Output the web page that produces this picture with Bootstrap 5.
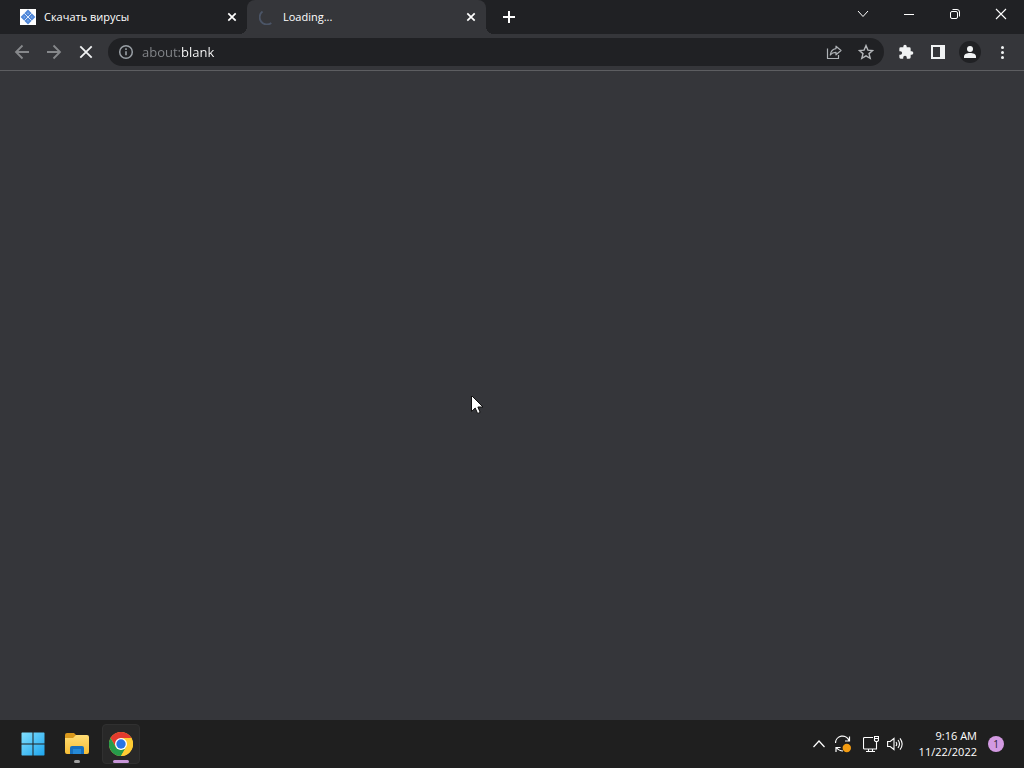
<!DOCTYPE html>
<html lang="en">
<head>
<meta charset="utf-8">
<meta name="viewport" content="width=device-width, initial-scale=1">
<title>Loading...</title>
<link rel="stylesheet" href="https://cdn.jsdelivr.net/npm/bootstrap@5.3.0/dist/css/bootstrap.min.css">
<style>
  :root { --strip: #202124; --bar: #35363a; --task: #1f1f1f; }
  body { background: var(--bar); color: #fff; font: 11px/16px "Open Sans", "Noto Sans", sans-serif; overflow: hidden; }
  button { background: none; border: 0; padding: 0; color: inherit; }
  svg { display: block; flex: none; }
  .strip { background: var(--strip); height: 34px; padding-left: 8px; }
  .tab { width: 239px; height: 34px; padding: 0 7px 0 12px; font-weight: 500; }
  .tab-open { background: var(--bar); border-radius: 8px 8px 0 0; position: relative; }
  .tab-open::before, .tab-open::after { content: ""; position: absolute; bottom: 0; width: 8px; height: 8px; }
  .tab-open::before { left: -8px; background: radial-gradient(circle at 0 0, var(--strip) 8px, var(--bar) 8px); }
  .tab-open::after { right: -8px; background: radial-gradient(circle at 100% 0, var(--strip) 8px, var(--bar) 8px); }
  .win { width: 46px; height: 28px; }
  .tools { height: 37px; padding: 0 6px; border-bottom: 1px solid #5d5e61; }
  .tool { width: 32px; height: 28px; }
  .omni { background: var(--strip); height: 28px; border-radius: 14px; margin: 0 6px; padding: 0 2px 0 10px; color: #9aa0a6; }
  .omni input { border: 0; outline: 0; padding: 0; font-size: 13px; line-height: 20px; min-width: 0;
    background: linear-gradient(90deg, #85888c 39px, #fff 39px); -webkit-background-clip: text; background-clip: text; color: transparent; }
  .avatar { width: 22px; height: 22px; background: var(--strip); border-radius: 50%; }
  .taskbar { background: var(--task); height: 48px; padding: 0 20px 0 11px; }
  .app { width: 44px; height: 48px; position: relative; }
  .app-open::before { content: ""; position: absolute; inset: 4px 3px; border-radius: 4px; background: #282828; border: 1px solid #303030; }
  .app svg { position: relative; }
  .app i { position: absolute; bottom: 5px; left: 50%; translate: -50%; width: 6px; height: 3px; border-radius: 2px; background: #a0a0a0; }
  .app-open i { width: 16px; background: #c795d8; }
  .clock { line-height: 16px; margin-left: 16px; }
  .count { width: 16px; height: 16px; border-radius: 50%; background: #d39ae2; color: #2b1f30; font-size: 10px; line-height: 16px; margin-left: 11px; }
  .pointer { position: absolute; left: 46%; top: 50%; }
</style>
</head>
<body class="d-flex flex-column vh-100">
<header>
  <div class="strip d-flex align-items-center">
    <div class="tab d-flex align-items-center">
      <svg width="16" height="16" viewBox="0 0 16 16"><path fill="#fff" d="M0 0h16v16H0z"/><path fill="#5087d8" d="M8 .6 15.4 8 8 15.4.6 8z"/><path d="m4.3 4.3 7.4 7.4m0-7.4-7.4 7.4" stroke="#dbe8fb" stroke-width="1"/><path d="m8 3.3 1 1-1 1-1-1zm0 7.4 1 1-1 1-1-1zM4.300 7l1 1-1 1-1-1zm7.400 0 1 1-1 1-1-1z" fill="#83adeb"/></svg>
      <span class="ms-2 flex-grow-1 text-nowrap">Скачать вирусы</span>
      <button aria-label="Close tab"><svg width="16" height="16" viewBox="0 0 16 16"><path d="m4.300 4.300 7.400 7.400m0-7.400-7.400 7.400" stroke="#fff" stroke-width="1.700"/></svg></button>
    </div>
    <div class="tab tab-open d-flex align-items-center">
      <svg width="16" height="16" viewBox="0 0 16 16"><path d="M3.500 2.500A6.500 6.500 0 0 0 12.300 14" fill="none" stroke="#4b5567" stroke-width="1.800"/></svg>
      <span class="ms-2 flex-grow-1 text-nowrap">Loading...</span>
      <button aria-label="Close tab"><svg width="16" height="16" viewBox="0 0 16 16"><path d="m4.300 4.300 7.400 7.400m0-7.400-7.400 7.400" stroke="#fff" stroke-width="1.700"/></svg></button>
    </div>
    <button class="ms-2 p-1" aria-label="New tab"><svg width="20" height="20" viewBox="0 0 20 20"><path d="M11 4v12M5 10h12" stroke="#fff" stroke-width="2"/></svg></button>
    <div class="d-flex ms-auto align-self-start">
      <button class="win d-flex align-items-center justify-content-center" aria-label="Search tabs"><svg width="12" height="12" viewBox="0 0 12 12"><path d="m1 3 5 5.500L11 3" fill="none" stroke="#fff"/></svg></button>
      <button class="win d-flex align-items-center justify-content-center" aria-label="Minimize"><svg width="12" height="12" viewBox="0 0 12 12"><path d="M1 6.500h10" stroke="#fff"/></svg></button>
      <button class="win d-flex align-items-center justify-content-center" aria-label="Restore"><svg width="12" height="12" viewBox="0 0 12 12" fill="none" stroke="#fff"><rect x="1.500" y="3.500" width="7" height="7" rx="1.500"/><path d="M3.500 1.500H8a2.500 2.500 0 0 1 2.500 2.500v4.500"/></svg></button>
      <button class="win d-flex align-items-center justify-content-center" aria-label="Close"><svg width="12" height="12" viewBox="0 0 12 12"><path d="m1 1 10 10m0-10L1 11" stroke="#fff" stroke-width="1.100"/></svg></button>
    </div>
  </div>
  <div class="tools d-flex align-items-center">
    <button class="tool d-flex align-items-center justify-content-center" aria-label="Back"><svg width="16" height="16" viewBox="0 0 16 16"><path d="M15 8H2m6.500-6.500L2 8l6.500 6.500" fill="none" stroke="#86888b" stroke-width="1.800"/></svg></button>
    <button class="tool d-flex align-items-center justify-content-center" aria-label="Forward"><svg width="16" height="16" viewBox="0 0 16 16"><path d="M1 8h13M7.500 1.500 14 8l-6.500 6.500" fill="none" stroke="#86888b" stroke-width="1.800"/></svg></button>
    <button class="tool d-flex align-items-center justify-content-center" aria-label="Stop"><svg width="16" height="16" viewBox="0 0 16 16"><path d="m2.300 2.300 11.400 11.400m0-11.400L2.300 13.700" stroke="#f1f3f4" stroke-width="1.800"/></svg></button>
    <div class="omni d-flex align-items-center flex-grow-1">
      <svg width="16" height="16" viewBox="0 0 16 16"><circle cx="8" cy="8" r="6.300" fill="none" stroke="#9aa0a6" stroke-width="1.500"/><path d="M8 7.200v4M8 4.300v1.600" stroke="#9aa0a6" stroke-width="1.600"/></svg>
      <input class="ms-2 flex-grow-1" type="text" value="about:blank" aria-label="Address">
      <button class="tool d-flex align-items-center justify-content-center" aria-label="Share"><svg width="16" height="16" viewBox="0 0 16 16" fill="none" stroke="#aeb2b6" stroke-width="1.200" stroke-linejoin="round"><path d="M1.500 4.500v10h11V11"/><path d="M10 2.200 15 6.500l-5 4.300V8.300C7.500 8.200 5.800 9 4.300 11 4.800 7.300 6.700 5 10 4.600z"/></svg></button>
      <button class="tool d-flex align-items-center justify-content-center" aria-label="Bookmark"><svg width="16" height="16" viewBox="0 0 16 16"><path d="m8 1.600 1.900 4.500 4.800.4-3.700 3.100 1.200 4.700L8 11.800l-4.200 2.500L5 9.600 1.300 6.500l4.800-.4z" fill="none" stroke="#b4b7ba" stroke-width="1.400"/></svg></button>
    </div>
    <button class="tool d-flex align-items-center justify-content-center" aria-label="Extensions"><svg width="16" height="16" viewBox="0 0 24 24"><path fill="#f1f3f4" d="M20.500 11H19V7a2 2 0 0 0-2-2h-4V3.500a2.500 2.500 0 0 0-5 0V5H4a2 2 0 0 0-2 2v3.800h1.500a2.700 2.700 0 0 1 0 5.400H2V20a2 2 0 0 0 2 2h3.800v-1.500a2.700 2.700 0 0 1 5.400 0V22H17a2 2 0 0 0 2-2v-4h1.500a2.500 2.500 0 0 0 0-5z"/></svg></button>
    <button class="tool d-flex align-items-center justify-content-center" aria-label="Side panel"><svg width="16" height="16" viewBox="0 0 16 16"><path fill="#f1f3f4" fill-rule="evenodd" d="M1 1h14v14H1zm2 2v10h7V3z"/></svg></button>
    <button class="tool d-flex align-items-center justify-content-center" aria-label="Profile"><span class="avatar d-flex align-items-center justify-content-center"><svg width="16" height="16" viewBox="0 0 16 16" fill="#f1f3f4"><circle cx="8" cy="5" r="3"/><path d="M2 14v-1.500C2 10 5 9 8 9s6 1 6 3.500V14z"/></svg></span></button>
    <button class="tool d-flex align-items-center justify-content-center" aria-label="Menu"><svg width="16" height="16" viewBox="0 0 16 16" fill="#f1f3f4"><circle cx="8.500" cy="3.500" r="1.500"/><circle cx="8.500" cy="8.500" r="1.500"/><circle cx="8.500" cy="13.500" r="1.500"/></svg></button>
  </div>
</header>
<main class="flex-grow-1 position-relative">
  <svg class="pointer" width="13" height="20" viewBox="0 1 13 20"><path d="M.5.5v16l3.700-3.500 2.400 5.500 2.600-1.100L6.900 12H12z" fill="#fff" stroke="#111"/></svg>
</main>
<footer class="taskbar d-flex align-items-center">
  <button class="app d-flex align-items-center justify-content-center" aria-label="Start"><svg width="24" height="24" viewBox="0 0 24 24"><defs><linearGradient id="win" gradientUnits="userSpaceOnUse" x1="0" y1="0" x2="24" y2="24"><stop stop-color="#83e0fd"/><stop offset="1" stop-color="#1ba4ee"/></linearGradient></defs><path fill="url(#win)" d="M1 .5h10.500V11.500H.5V1zM12.500.5H23l.5.5v10.500h-11zM.5 12.500h11v11H1l-.5-.5zM12.500 12.500h11V23l-.5.5H12.500z"/></svg></button>
  <button class="app d-flex align-items-center justify-content-center" aria-label="File Explorer"><svg width="26" height="24" viewBox="0 0 26 24"><defs><linearGradient id="fold" x2="0" y2="1"><stop stop-color="#ffdd75"/><stop offset="1" stop-color="#f7bd35"/></linearGradient></defs><path fill="#d9981c" d="M1 3q0-2 2-2h7l3 3-4 4H1z"/><path fill="url(#fold)" d="M1 6h8l3-3h11q2 0 2 2v15q0 2-2 2H3q-2 0-2-2z"/><path fill="#176fbd" d="M6 22v-6q0-2 2-2h10q2 0 2 2v6z"/><path fill="#2589d7" d="M9 17h8v5H9z"/></svg><i></i></button>
  <button class="app app-open d-flex align-items-center justify-content-center" aria-label="Chrome"><svg width="24" height="24" viewBox="0 0 24 24"><circle cx="12" cy="12" r="12" fill="#fc3"/><path fill="#e33b2e" d="M1.600 6A12 12 0 0 1 22.400 6H12L6.800 15z"/><path fill="#269b4b" d="M1.600 6A12 12 0 0 0 12 24l5.200-9L12 18 6.800 15z"/><path fill="#fc3" d="M22.400 6A12 12 0 0 1 12 24l5.200-9L12 6z"/><circle cx="12" cy="12" r="6" fill="#fff"/><circle cx="12" cy="12" r="4.700" fill="#2774e4"/></svg><i></i></button>
  <div class="d-flex align-items-center ms-auto">
    <button aria-label="Show hidden icons"><svg width="16" height="16" viewBox="0 0 16 16"><path d="m2.500 11 5.500-6 5.500 6" fill="none" stroke="#fff" stroke-width="1.200"/></svg></button>
    <button class="ms-2" aria-label="Update"><svg width="16" height="18" viewBox="1 0 16 18"><path d="M1.500 8A7 7 0 0 1 15 5.500M15.500 1.500V6H11M2 17v-4.500h4.500M2.500 12.500Q5 16 9 16" fill="none" stroke="#fff" stroke-width="1.200"/><circle cx="12.800" cy="13" r="4.200" fill="#f39c12"/></svg></button>
    <button class="ms-2 ps-1" aria-label="Network"><svg width="16" height="18" viewBox="0 0 16 18" fill="none" stroke="#fff" stroke-width="1.100"><path d="M10 2.500H1.500Q.5 2.500.5 3.500v9.500q0 1 1 1h12v-7.500M5.500 14v2.500m4-2.500v2.500M3 16.500h9M11.500 1.500h4v4l-1 1h-2l-1-1zM11.500 3.500h4"/></svg></button>
    <button class="ms-2" aria-label="Volume"><svg width="16" height="16" viewBox="0 0 16 16" fill="none" stroke="#fff" stroke-width="1.100"><path d="M.6 5.500h2.600L7 2.500v11L3.200 10.500H.6zM9 6q1.500 2 0 4M11 4q3 4 0 8M13 2.300q4.300 5.700 0 11.400"/></svg></button>
    <button class="clock text-end text-nowrap">9:16 AM<br>11/22/2022</button>
    <button class="count" aria-label="Notifications">1</button>
  </div>
</footer>
<script src="https://cdn.jsdelivr.net/npm/bootstrap@5.3.0/dist/js/bootstrap.bundle.min.js"></script>
</body>
</html>
